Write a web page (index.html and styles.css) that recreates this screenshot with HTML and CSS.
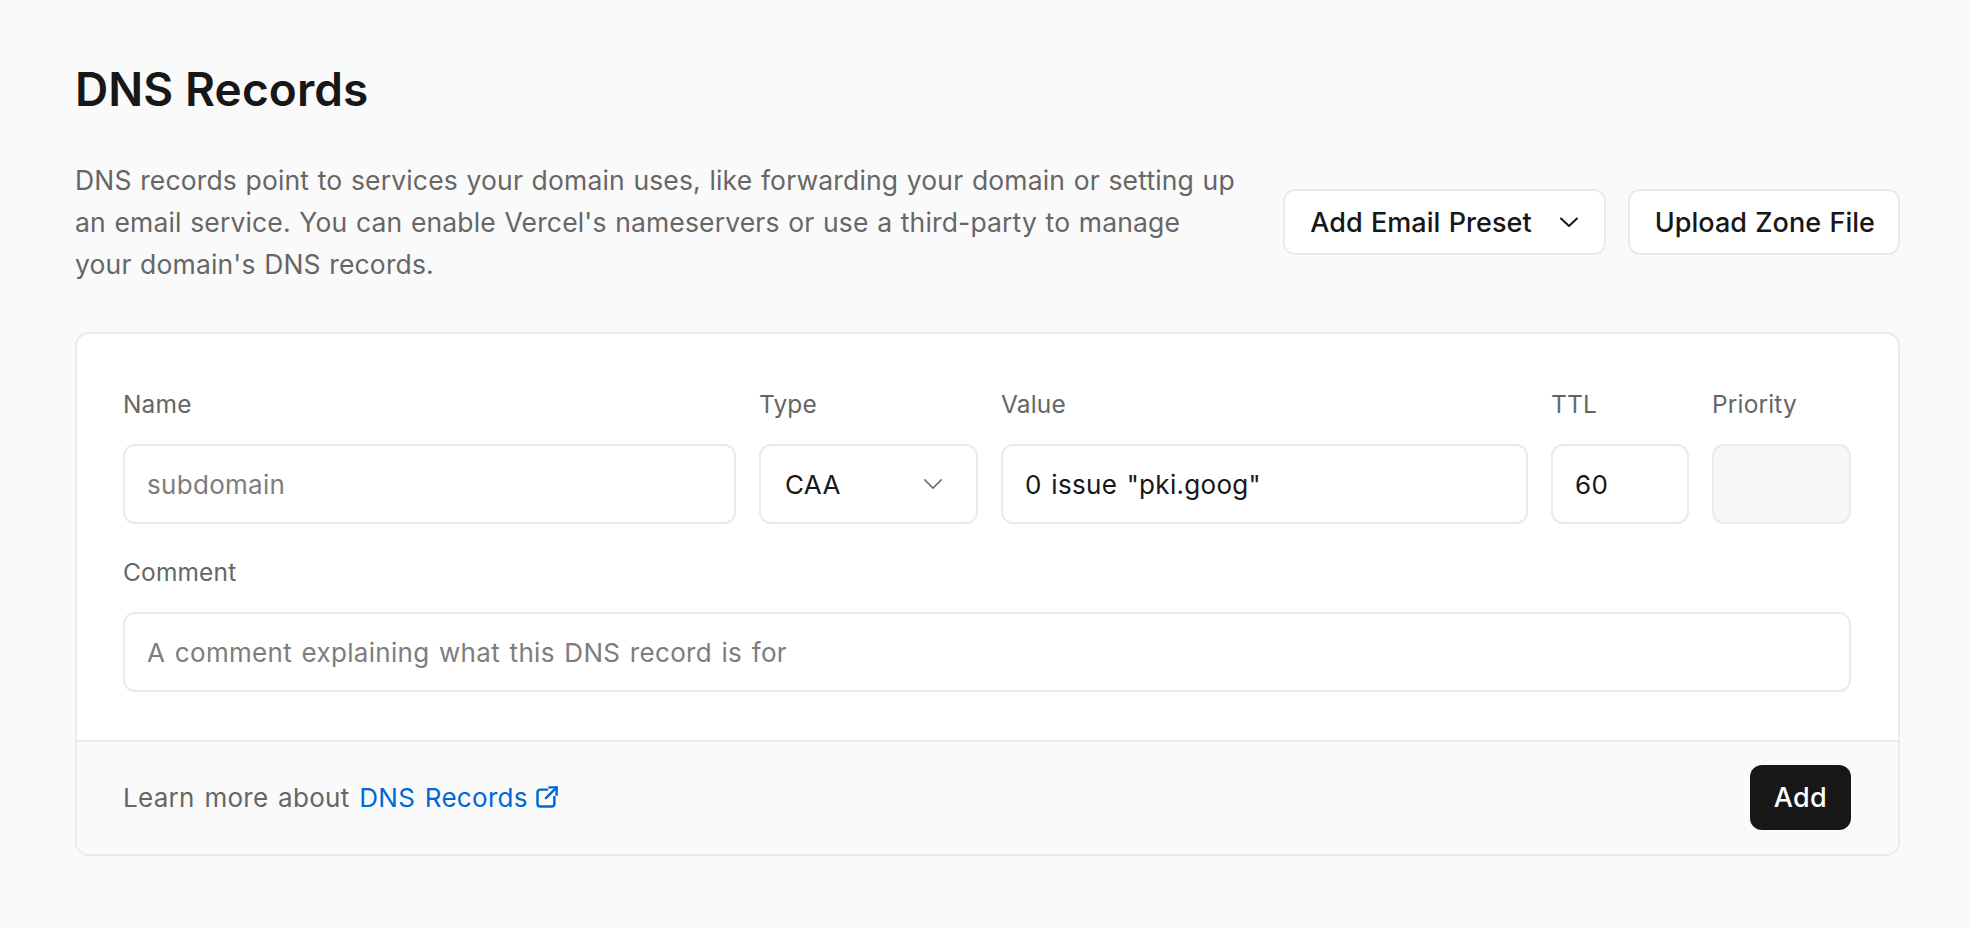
FILE: index.html
```html
<!DOCTYPE html>
<html lang="en">
<head>
<meta charset="utf-8">
<title>DNS Records</title>
<link rel="stylesheet" href="styles.css">
</head>
<body>
<main class="page">
  <h1 class="title">DNS Records</h1>
  <div class="intro">
    <p class="intro-text">DNS records point to services your domain uses, like forwarding your domain or setting up an email service. You can enable Vercel's nameservers or use a third-party to manage your domain's DNS records.</p>
    <div class="actions">
      <button class="btn btn-secondary" type="button">
        <span>Add Email Preset</span>
        <svg class="btn-chevron" viewBox="0 0 24 24" width="24" height="24" fill="none" stroke="currentColor" stroke-width="2" stroke-linecap="round" stroke-linejoin="round"><path d="M4 8.5l8 7.5 8-7.5"/></svg>
      </button>
      <button class="btn btn-secondary" type="button">Upload Zone File</button>
    </div>
  </div>

  <section class="card">
    <div class="card-body">
      <div class="row">
        <div class="field">
          <label class="label">Name</label>
          <input class="input" type="text" placeholder="subdomain">
        </div>
        <div class="field">
          <label class="label">Type</label>
          <div class="input select">
            <span>CAA</span>
            <svg class="select-chevron" viewBox="0 0 24 24" width="22" height="22" fill="none" stroke="currentColor" stroke-width="1.6" stroke-linecap="round" stroke-linejoin="round"><path d="M3 7.5l9 9 9-9"/></svg>
          </div>
        </div>
        <div class="field">
          <label class="label">Value</label>
          <input class="input" type="text" value="0 issue &quot;pki.goog&quot;">
        </div>
        <div class="field">
          <label class="label">TTL</label>
          <input class="input" type="text" value="60">
        </div>
        <div class="field">
          <label class="label">Priority</label>
          <input class="input input-disabled" type="text" disabled>
        </div>
      </div>
      <div class="field field-full">
        <label class="label">Comment</label>
        <input class="input" type="text" placeholder="A comment explaining what this DNS record is for">
      </div>
    </div>
    <footer class="card-footer">
      <p class="learn">Learn more about <a class="link" href="#">DNS Records<svg class="ext" viewBox="0 0 24 24" width="27" height="27" fill="none" stroke="currentColor" stroke-width="2.2" stroke-linecap="round" stroke-linejoin="round"><path d="M12.5 5H6.5A2.5 2.5 0 0 0 4 7.5v10A2.5 2.5 0 0 0 6.5 20h10a2.5 2.5 0 0 0 2.5-2.5V11.5"/><path d="M14.5 3H21v6.5"/><path d="M21 3l-9.5 9.5"/></svg></a></p>
      <button class="btn btn-primary" type="button">Add</button>
    </footer>
  </section>
</main>
</body>
</html>
```

FILE: styles.css
```css
* {
  box-sizing: border-box;
}

html, body {
  margin: 0;
  padding: 0;
  background: #fafafa;
}

body {
  font-family: Inter, "Noto Sans", "Liberation Sans", sans-serif;
  color: #171717;
  -webkit-font-smoothing: antialiased;
}

.page {
  padding: 61px 70px 60px 75px;
}

.title {
  margin: 0;
  font-size: 46px;
  line-height: 56px;
  font-weight: 600;
  letter-spacing: 0.1px;
  color: #171717;
}

.intro {
  display: flex;
  align-items: center;
  justify-content: space-between;
  margin-top: 42px;
}

.intro-text {
  margin: 0;
  max-width: 1164px;
  font-size: 26.5px;
  line-height: 42px;
  color: #666666;
  letter-spacing: 0.15px;
  word-spacing: 1px;
}

.actions {
  display: flex;
  gap: 22px;
  flex-shrink: 0;
}

.btn {
  font-family: inherit;
  border: none;
  cursor: pointer;
  display: inline-flex;
  align-items: center;
  font-weight: 500;
}

.btn-secondary {
  height: 66px;
  padding: 0 23px 0 25px;
  background: #ffffff;
  border: 2px solid #ebebeb;
  border-radius: 12px;
  font-size: 27px;
  color: #171717;
  gap: 25px;
  letter-spacing: 0.05px;
  word-spacing: 1px;
}

.btn-chevron {
  color: #171717;
}

.card {
  margin-top: 47px;
  background: #ffffff;
  border: 2px solid #ebebeb;
  border-radius: 14px;
  overflow: hidden;
}

.card-body {
  padding: 46px 47px 48px 46px;
  display: flex;
  flex-direction: column;
  gap: 24px;
}

.row {
  display: grid;
  grid-template-columns: 1fr 219px 527px 138px 139px;
  gap: 23px;
}

.field {
  display: flex;
  flex-direction: column;
  gap: 16px;
  min-width: 0;
}

.label {
  font-size: 24.5px;
  line-height: 48px;
  height: 48px;
  color: #666666;
  letter-spacing: 0.15px;
}

.input {
  width: 100%;
  height: 80px;
  padding: 0 22px;
  border: 2px solid #ebebeb;
  border-radius: 12px;
  background: #ffffff;
  font-family: inherit;
  font-size: 26px;
  color: #171717;
  outline: none;
  letter-spacing: 0.3px;
  word-spacing: 2px;
}

.input::placeholder {
  color: #7d7d7d;
  opacity: 1;
}

.select {
  display: flex;
  align-items: center;
  justify-content: space-between;
  padding: 0 32px 0 24px;
}

.select-chevron {
  color: #6b6b6b;
}

.input-disabled {
  background: #f7f7f7;
}

.card-footer {
  display: flex;
  align-items: center;
  justify-content: space-between;
  padding: 23px 47px 24px 46px;
  background: #fafafa;
  border-top: 2px solid #ebebeb;
}

.learn {
  margin: 0;
  font-size: 26px;
  color: #666666;
  letter-spacing: 0.3px;
  word-spacing: 2px;
}

.link {
  color: #0068d6;
  text-decoration: none;
  display: inline-flex;
  align-items: center;
  gap: 5px;
}

.ext {
  width: 27px;
  height: 27px;
}

.btn-primary {
  height: 65px;
  padding: 0 24px;
  background: #171717;
  color: #ffffff;
  border-radius: 12px;
  font-size: 27px;
  letter-spacing: 0.3px;
}
```
